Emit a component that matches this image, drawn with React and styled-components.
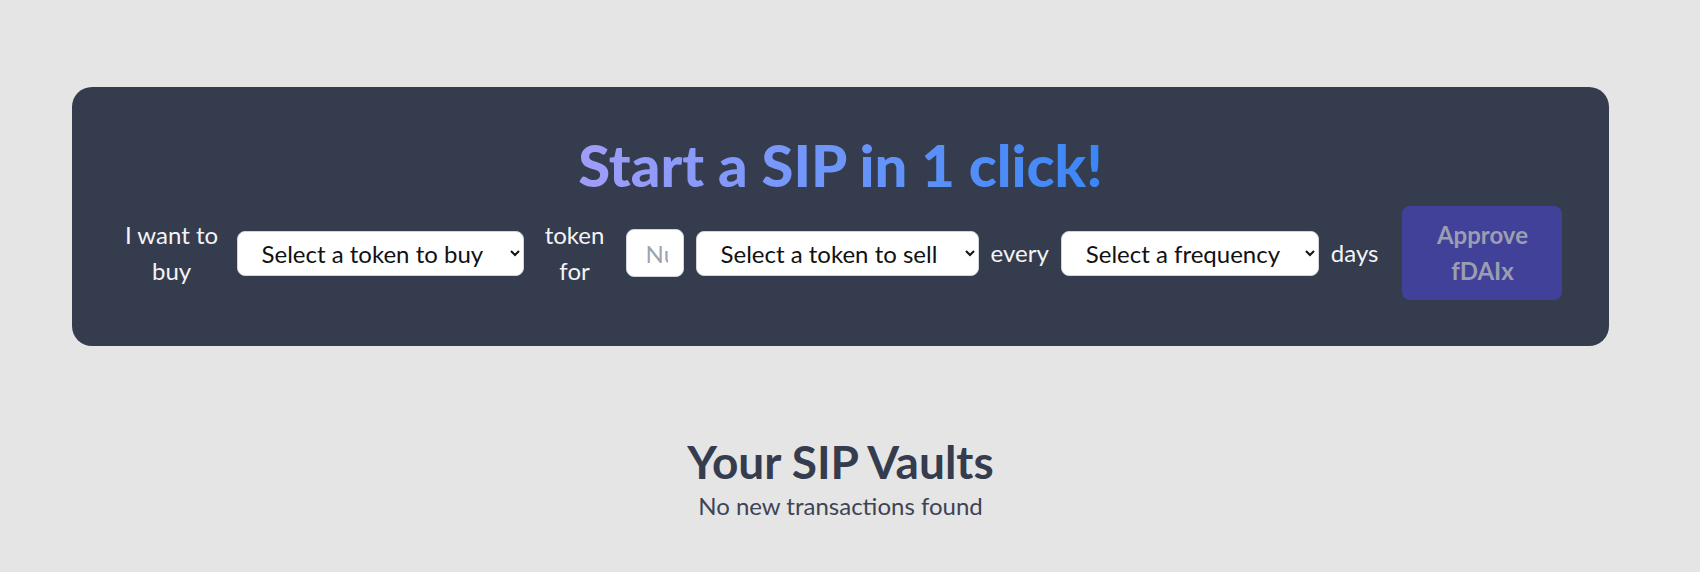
import styled, { createGlobalStyle } from "styled-components";

const GlobalStyle = createGlobalStyle`
  body {
    margin: 0;
    background: #e5e5e5;
    font-family: Lato, "Open Sans", sans-serif;
  }
`;

const Page = styled.div`
  max-width: 1681px;
  padding-top: 87px;
  display: flex;
  flex-direction: column;
`;

const Panel = styled.section`
  margin: 0 72px;
  height: 259px;
  box-sizing: border-box;
  background: #343c4e;
  border-radius: 20px;
  display: flex;
  flex-direction: column;
  align-items: center;
  padding-top: 46px;
`;

const Title = styled.h1`
  margin: 0;
  font-family: Lato, sans-serif;
  font-weight: 900;
  font-size: 58px;
  line-height: 64px;
  background: linear-gradient(90deg, #a19df9 0%, #6c95fa 50%, #3a86f7 100%);
  -webkit-background-clip: text;
  background-clip: text;
  color: transparent;
`;

const Row = styled.div`
  margin-top: 9px;
  display: flex;
  align-items: center;
  gap: 12px;
`;

const Label = styled.span`
  color: #f3f4f6;
  font-size: 24px;
  line-height: 36px;
  text-align: center;
  width: ${(p) => (p.$w ? `${p.$w}px` : "auto")};
  padding: 0 ${(p) => p.$pad || 0}px;
  margin-right: ${(p) => p.$mr || 0}px;
`;

const Select = styled.select`
  width: ${(p) => p.$w}px;
  height: 45px;
  box-sizing: border-box;
  padding: 0 10px 0 20px;
  border: 1px solid #d1d5db;
  border-radius: 8px;
  background: #fff;
  color: #111;
  font-family: Lato, sans-serif;
  font-size: 24px;
`;

const NumberInput = styled.input`
  width: 58px;
  height: 48px;
  box-sizing: border-box;
  padding: 0 0 0 19px;
  border: 1px solid #d1d5db;
  border-radius: 8px;
  background: #fff;
  font-family: Lato, sans-serif;
  font-size: 24px;
  outline: none;

  &::placeholder {
    color: #9ca3af;
  }
`;

const ApproveButton = styled.button`
  width: 160px;
  height: 94px;
  border: none;
  border-radius: 8px;
  background: #42419a;
  color: #9a9eb0;
  font-family: Lato, sans-serif;
  font-weight: 700;
  font-size: 24px;
  line-height: 36px;
  padding: 0 28px;
`;

const Vaults = styled.section`
  margin-top: 89px;
  display: flex;
  flex-direction: column;
  align-items: center;
`;

const VaultsTitle = styled.h2`
  margin: 0;
  font-weight: 700;
  font-size: 46px;
  line-height: 54px;
  color: #343c4e;
`;

const Empty = styled.p`
  margin: 0;
  font-size: 24px;
  line-height: 34px;
  color: #3d4455;
`;

export default function App() {
  return (
    <>
      <GlobalStyle />
      <Page>
        <Panel>
          <Title>Start a SIP in 1 click!</Title>
          <Row>
            <Label $w={94} $pad={6}>I want to buy</Label>
            <Select $w={287} defaultValue="">
              <option value="" disabled>Select a token to buy</option>
            </Select>
            <Label $w={62} $pad={8}>token for</Label>
            <NumberInput type="number" placeholder="Number" />
            <Select $w={283} defaultValue="">
              <option value="" disabled>Select a token to sell</option>
            </Select>
            <Label>every</Label>
            <Select $w={258} defaultValue="">
              <option value="" disabled>Select a frequency</option>
            </Select>
            <Label $mr={12}>days</Label>
            <ApproveButton disabled>Approve fDAIx</ApproveButton>
          </Row>
        </Panel>
        <Vaults>
          <VaultsTitle>Your SIP Vaults</VaultsTitle>
          <Empty>No new transactions found</Empty>
        </Vaults>
      </Page>
    </>
  );
}
